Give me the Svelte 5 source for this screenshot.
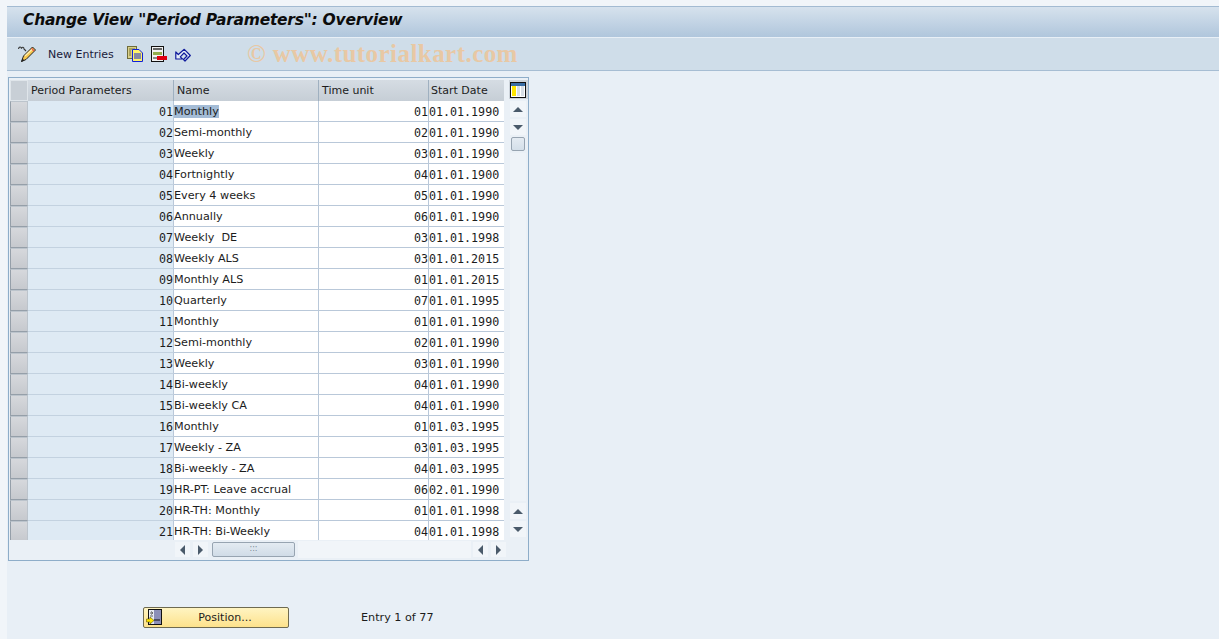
<script>
  const rows = [
    ['01','Monthly','01','01.01.1990'],['02','Semi-monthly','02','01.01.1990'],['03','Weekly','03','01.01.1990'],
    ['04','Fortnightly','04','01.01.1900'],['05','Every 4 weeks','05','01.01.1990'],['06','Annually','06','01.01.1990'],
    ['07','Weekly  DE','03','01.01.1998'],['08','Weekly ALS','03','01.01.2015'],['09','Monthly ALS','01','01.01.2015'],
    ['10','Quarterly','07','01.01.1995'],['11','Monthly','01','01.01.1990'],['12','Semi-monthly','02','01.01.1990'],
    ['13','Weekly','03','01.01.1990'],['14','Bi-weekly','04','01.01.1990'],['15','Bi-weekly CA','04','01.01.1990'],
    ['16','Monthly','01','01.03.1995'],['17','Weekly - ZA','03','01.03.1995'],['18','Bi-weekly - ZA','04','01.03.1995'],
    ['19','HR-PT: Leave accrual','06','02.01.1990'],['20','HR-TH: Monthly','01','01.01.1998'],['21','HR-TH: Bi-Weekly','04','01.01.1998']
  ];
</script>

<div class="page">
  <div class="title">Change View "Period Parameters": Overview</div>
  <div class="toolbar">
    <svg class="ic pencil" width="18" height="17" viewBox="0 0 18 17">
      <path d="M0.500 3 C1 0.500 3 0.500 3.500 2.500 C4 0.500 6 1 6 3 L8 5" fill="none" stroke="#333" stroke-width="1.1"/>
      <path d="M14.500 1 L17.500 4 L8 13.500 L3.500 15.500 L5.500 10 Z" fill="#f7c64c" stroke="#222" stroke-width="1"/>
      <path d="M13.500 2.500 L16 5" stroke="#e8574a" stroke-width="1.6"/>
      <path d="M7 10 L14 3.500" stroke="#fff0b0" stroke-width="1.2"/>
      <path d="M3 16 L4.500 12.500 L6.500 14.500 Z" fill="#222"/>
    </svg>
    <span class="tbtext">New Entries</span>
    <svg class="ic copy" width="16" height="16" viewBox="0 0 16 16">
      <rect x="0.500" y="0.500" width="9" height="12" fill="#d9d08a" stroke="#6f6c3a"/>
      <path d="M2 3 H8 M2 5 H4 M2 7 H4 M2 9 H4" stroke="#77733a"/>
      <path d="M5.500 3.500 H12 L15.500 7 V15.500 H5.500 Z" fill="#fff26a" stroke="#1020d8"/>
      <path d="M7 8 H14 M7 10 H14 M7 12 H14" stroke="#1020d8"/>
    </svg>
    <svg class="ic del" width="16" height="16" viewBox="0 0 16 16">
      <rect x="0.500" y="0.500" width="12" height="15" fill="#f2f2f2" stroke="#111"/>
      <rect x="2" y="2" width="9" height="2" fill="#666"/>
      <rect x="2" y="6" width="9" height="3" fill="#93ad4e"/>
      <rect x="2" y="11" width="4" height="2" fill="#888"/>
      <rect x="6" y="10" width="10" height="4" fill="#e00010"/>
    </svg>
    <svg class="ic undo" width="16" height="15" viewBox="0 0 16 15">
      <path d="M0.800 5 V12 H7.500 L5.300 9.800 L9 6 L12 9 L8.500 12.500 L10 14 L15.300 8.500 L9.300 2.300 L3.300 7.500 Z" fill="#e6eef7" stroke="#101a9c" stroke-width="1.2" stroke-linejoin="round"/>
    </svg>
    <span class="mark">© www.tutorialkart.com</span>
  </div>

  <div class="content">
    <div class="panel">
      <div class="grid">
        <div class="hrow">
          <div class="hsel"></div>
          <div class="h c1">Period Parameters</div>
          <div class="h c2">Name</div>
          <div class="h c3">Time unit</div>
          <div class="h c4">Start Date</div>
        </div>
        {#each rows as r, i}
          <div class="row">
            <div class="sel"></div>
            <div class="cell c1 key">{r[0]}</div>
            <div class="cell c2 txt"><span class:hl={i === 0}>{r[1]}</span></div>
            <div class="cell c3 num">{r[2]}</div>
            <div class="cell c4 date">{r[3]}</div>
          </div>
        {/each}
      </div>
      <div class="vbar">
        <div class="cfg">
          <svg width="16" height="16" viewBox="0 0 16 16">
            <rect x="0.500" y="0.500" width="15" height="15" fill="#fff" stroke="#111"/>
            <rect x="1" y="1" width="14" height="3" fill="#3a6ea5"/>
            <rect x="2" y="4" width="4" height="10" fill="#ffe600"/>
            <rect x="7" y="4" width="3" height="10" fill="#d8dfe6"/>
            <rect x="11" y="4" width="3" height="10" fill="#d8dfe6"/>
          </svg>
        </div>
        <div class="sb"><i class="up"></i></div>
        <div class="sb"><i class="down"></i></div>
        <div class="thumb"></div>
        <div class="track"></div>
        <div class="sb"><i class="up"></i></div>
        <div class="sb last"><i class="down"></i></div>
      </div>
      <div class="hbar">
        <div class="sh"><i class="left"></i></div>
        <div class="sh"><i class="right"></i></div>
        <div class="hthumb"><span>:::</span></div>
        <div class="htrack"></div>
        <div class="sh"><i class="left"></i></div>
        <div class="sh"><i class="right"></i></div>
      </div>
    </div>

    <div class="foot">
      <button class="pos">
        <svg width="16" height="17" viewBox="0 0 16 17">
          <rect x="2.500" y="0.500" width="13" height="15" fill="#e9ecf4" stroke="#111"/>
          <rect x="8" y="1" width="7" height="14" fill="#8c8fb8"/>
          <path d="M8 11 H14" stroke="#111"/>
          <path d="M4 4 H7 M5 2.500 L7 4 L5 5.500 M4 7 H7" stroke="#666" fill="none"/>
          <path d="M0.500 10 H4 V8 L8 11.500 L4 15 V13 H0.500 Z" fill="#ffe600" stroke="#6a5a00" stroke-width="0.600"/>
        </svg>
        <span>Position...</span>
      </button>
      <span class="entry">Entry 1 of 77</span>
    </div>
  </div>
</div>

<style>
  :global(body) { margin: 0; background: #f1f5f9; overflow: hidden; }
  .page {
    height: 639px; box-sizing: border-box; margin-left: 7px; padding-top: 6px;
    display: flex; flex-direction: column;
    font-family: "DejaVu Sans", sans-serif; font-size: 11px; color: #1c1c1c;
  }
  .title {
    height: 31px; box-sizing: border-box; padding-left: 16px; flex: none;
    border-top: 1px solid #a3bbd2;
    background: linear-gradient(#d6e2ed, #b0c6dc);
    font: italic bold 15.5px/27px "DejaVu Sans", sans-serif; color: #0c0c0c; letter-spacing: -0.25px;
  }
  .toolbar {
    height: 34px; box-sizing: border-box; flex: none; display: flex; align-items: center;
    border-top: 1px solid #e8eff6; border-bottom: 1px solid #a6bdd3;
    background: #cfdde9; padding-left: 11px;
  }
  .ic { flex: none; display: block; }
  .tbtext { margin-left: 12px; color: #1a1a3a; width: 67px; white-space: nowrap; }
  .copy { margin-left: 12px; }
  .del { margin-left: 8px; }
  .undo { margin-left: 8px; }
  .mark {
    margin-left: 56px; font: bold 25px "Liberation Serif", serif; color: #e8c8a4; white-space: nowrap; letter-spacing: 0.45px;
  }
  .content { flex: 1; background: #e8eff6; padding: 6px 0 0 1px; display: flex; flex-direction: column; }
  .panel {
    width: 521px; height: 484px; box-sizing: border-box; border: 1px solid #8eadc9; background: #eaf0f6; flex: none;
    display: grid; grid-template-columns: 495px 1fr; grid-template-rows: 460px 1fr; padding: 2px 0 0 1px;
  }
  .grid { display: flex; flex-direction: column; overflow: hidden; }
  .hrow { display: flex; height: 21px; flex: none; }
  .hsel { width: 18px; box-sizing: border-box; background: #c8cfd6; border: 1px solid #dfe5ea; }
  .h {
    box-sizing: border-box; line-height: 21px; padding-left: 3px;
    background: linear-gradient(#d5dce3, #c6ced6); border-right: 1px solid #9fb0c0; white-space: nowrap; color: #1c1c1c;
  }
  .row { display: flex; height: 21px; flex: none; }
  .c1 { width: 146px; }
  .c2 { width: 145px; }
  .c3 { width: 110px; }
  .c4 { width: 75px; }
  .h.c4 { border-right: 0; padding-left: 2px; }
  .sel {
    width: 18px; box-sizing: border-box; flex: none; background: linear-gradient(#d6d8dc, #c6c9ce);
    border: 1px solid #959fa9; border-top-color: #bcc4cc; border-right-color: #bcc4cc;
  }
  .cell { box-sizing: border-box; border-bottom: 1px solid #b9c8d9; white-space: pre; line-height: 20px; padding-top: 1px; }
  .key, .num, .date { font-family: "DejaVu Sans Mono", monospace; font-size: 11.67px; }
  .txt { font-size: 11.2px; }
  .key { background: #deeaf4; text-align: right; border-right: 1px solid #b9c8d9; border-bottom-color: #c3d2e0; }
  .txt { background: #fff; border-right: 1px solid #b9c8d9; }
  .num { background: #fff; text-align: right; border-right: 1px solid #b9c8d9; }
  .date { background: #fff; }
  .hl { background: #a4bcd6; }
  .vbar { display: flex; flex-direction: column; align-items: center; padding: 0 0 3px 3px; }
  .cfg {
    width: 19px; height: 19px; box-sizing: border-box; background: #cdd4db; display: flex; align-items: center; justify-content: center;
    margin-bottom: 2px;
  }
  .sb { width: 16px; height: 16px; background: #f1f5f9; margin-bottom: 2px; flex: none; display: flex; align-items: center; justify-content: center; }
  .thumb {
    width: 14px; height: 14px; flex: none; box-sizing: border-box; border: 1px solid #97a4b1; border-radius: 2px;
    background: linear-gradient(#e4ebf2, #d4dfe9);
  }
  .track { flex: 1; background: #eef3f8; width: 16px; margin: 2px 0; }
  .sb.last { margin-bottom: 0; }
  i { display: block; width: 0; height: 0; }
  .up { border: 5px solid transparent; border-top: 0; border-bottom: 5px solid #4a5a6a; }
  .down { border: 5px solid transparent; border-bottom: 0; border-top: 5px solid #4a5a6a; }
  .left { border: 5px solid transparent; border-left: 0; border-right: 5px solid #4a5a6a; }
  .right { border: 5px solid transparent; border-right: 0; border-left: 5px solid #4a5a6a; }
  .hbar { grid-column: 1 / 3; display: flex; align-items: flex-start; padding-left: 165px; padding-top: 2px; height: 20px; box-sizing: border-box; }
  .sh { width: 15px; height: 15px; flex: none; background: #f1f5f9; margin-right: 3px; display: flex; align-items: center; justify-content: center; }
  .hthumb {
    width: 83px; height: 15px; flex: none; box-sizing: border-box; margin-left: 1px; text-align: center;
    border: 1px solid #97a4b1; border-radius: 2px; background: linear-gradient(#e4ebf2, #d0dce7);
    font: 8px/11px "DejaVu Sans", sans-serif; color: #7a8794;
  }
  .htrack { width: 173px; height: 17px; background: #f1f5f9; margin: -1px 2px 0 3px; flex: none; }
  .foot { display: flex; align-items: center; margin-top: 46px; }
  .pos {
    margin: 0 0 0 135px; width: 146px; height: 21px; box-sizing: border-box; padding: 0 0 0 2px;
    display: flex; align-items: center; border: 1px solid #6e6a50; border-radius: 2px;
    background: linear-gradient(#fff4c2, #fde28c); font: 11px "DejaVu Sans", sans-serif; color: #1c1c1c;
  }
  .pos span { flex: 1; text-align: center; }
  .entry { margin-left: 72px; font-size: 11.2px; color: #1c1c1c; }
</style>
